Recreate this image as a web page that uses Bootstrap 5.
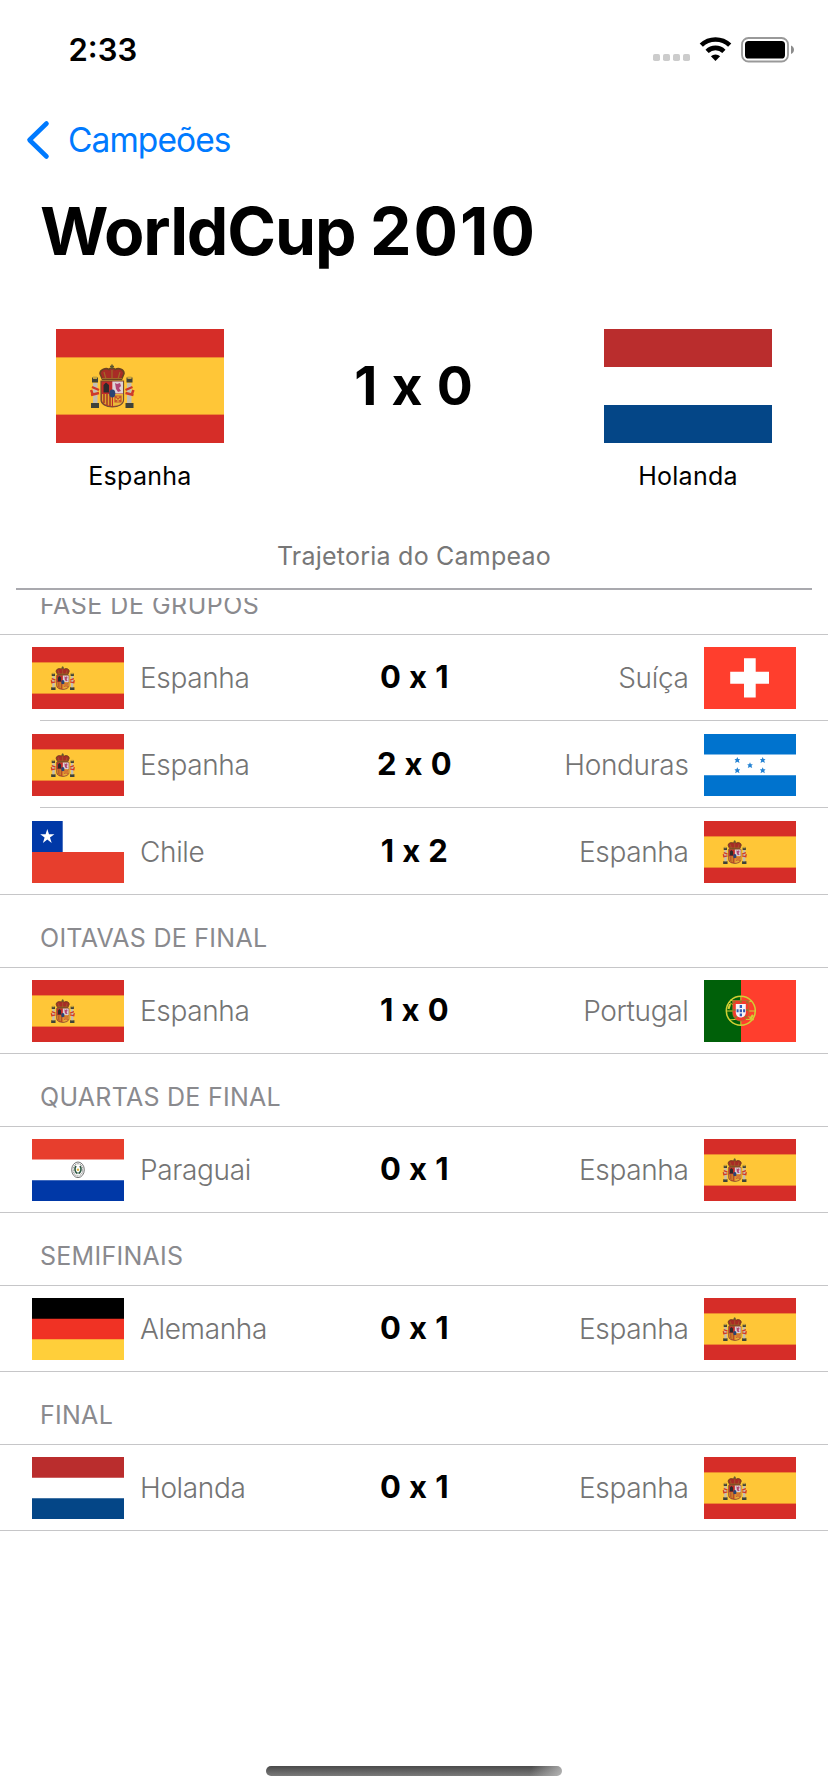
<!DOCTYPE html>
<html lang="pt-BR">
<head>
<meta charset="utf-8">
<meta name="viewport" content="width=device-width, initial-scale=1">
<title>WorldCup 2010</title>
<link rel="stylesheet" href="https://cdn.jsdelivr.net/npm/bootstrap@5.3.0/dist/css/bootstrap.min.css">
<style>
  body { font-family: Inter, "Liberation Sans", sans-serif; color: #000; background: #fff; line-height: 1.2; }
  .screen { height: 1792px; }
  .status-bar { height: 100px; padding: 0 34px 0 68.5px; font-size: 31px; font-weight: 600; }
  .nav-back { height: 80px; padding-left: 26px; gap: 18px; font-size: 33.5px; letter-spacing: -.93px; color: #007aff; }
  .page-title { height: 104px; padding: 0 0 0 40px; font-size: 66px; font-weight: 700; letter-spacing: -1.15px; white-space: pre; }
  .page-title .year { letter-spacing: 2px; }
  .final-match { padding: 45px 56px 0; }
  .final-match .flag { width: 168px; height: 114px; display: block; }
  .final-score { height: 114px; font-size: 53.5px; font-weight: 700; letter-spacing: .8px; }
  .final-name { height: 66px; font-size: 25px; letter-spacing: .28px; }
  .path-title { height: 64px; margin: 15px 16px 0; box-sizing: content-box; border-bottom: 2px solid #a9a9ae; font-size: 25px; letter-spacing: .23px; color: #777; }
  .path-list { margin-top: 8px; }
  .stage-name { height: 72px; padding: 0 0 14px 40px; font-size: 25px; line-height: 30px; letter-spacing: .27px; color: #8a8a8e; }
  .stage:first-child .stage-name { height: 44px; margin-top: -8px; letter-spacing: .5px; }
  .games { border-top: 1px solid #c6c6c8; border-bottom: 1px solid #c6c6c8; }
  .game { height: 86px; padding: 12px 32px 0; }
  .game + .game { height: 87px; padding-top: 13px; }
  .game + .game:last-child { height: 86px; }
  .game:only-child { height: 85px; }
  .game:not(:last-child) { background: linear-gradient(#c6c6c8, #c6c6c8) 40px 100% / 100% 1px no-repeat; }
  .game .flag { width: 92px; height: 62px; flex: none; }
  .team { flex: 1 1 0; gap: 16px; height: 62px; font-size: 28px; font-weight: 300; letter-spacing: -.35px; color: #747474; }
  .team.justify-content-end { gap: 15.5px; }
  .team span { padding-top: 2px; }
  .result { height: 62px; padding: 0 0 2px 1px; font-size: 31px; font-weight: 700; letter-spacing: .4px; }
  .home-bar { width: 296px; height: 10px; margin-bottom: 16px; border-radius: 5px;
    background: linear-gradient(105deg, transparent 89%, rgba(190,190,190,.85) 100%), linear-gradient(#4a4a4a, #7a7a7a); }
</style>
</head>
<body>

<svg width="0" height="0" class="position-absolute" aria-hidden="true">
  <symbol id="es" viewBox="0 0 168 114" preserveAspectRatio="none">
    <path fill="#d62d28" d="M0 0h168v114H0z"/>
    <path fill="#ee8a30" d="M0 28h168v58H0z"/>
    <path fill="#ffc637" d="M0 29h168v56H0z"/>
    <!-- pillars -->
    <path fill="#3f4239" d="M36 48.500h6v5h-6zM70.500 48.500h6v5h-6zM35 74h8v5h-8zM69.500 74h8v5h-8z"/>
    <path fill="#c8a33c" d="M37 47.500h4V50h-4zM71.500 47.500h4V50h-4z"/>
    <path fill="#c4bfb2" d="M37 54h4.500v20H37zM71 54h4.500v20H71z"/>
    <path fill="none" stroke="#cf3a2a" stroke-width="2.400" d="M35 66l8-2M36 58l7 3M35 61l2 5M77.500 66l-8-2M76.500 58l-7 3M77.500 61l-2 5"/>
    <!-- crown -->
    <path fill="#a82c26" stroke="#6a4220" stroke-width="1.600" d="M46.500 50.500l-2.500-6c0-4 6-6 9-4 1-2 5-2 6 0 4-2 9 0 9 4l-2.500 6z"/>
    <path fill="none" stroke="#a06a28" stroke-width="1.200" d="M50 50l-2-7M56 50v-9M62 50l2-7M46 49.500h20"/>
    <path stroke="#5b5530" stroke-width="1.500" d="M56 35.500v5M54 37.500h4"/>
    <!-- shield -->
    <path fill="#c22b28" stroke="#6f4c35" stroke-width="1.200" d="M45 52h22.500v19c0 4-5 7-11.200 7S45 75 45 71z"/>
    <path fill="#ddd3d5" d="M56.300 52.500H67v12H56.300z"/>
    <path fill="#b04674" d="M59 54l2 1 3-1 1 3-2 2 2 3-3 1-2-3z"/>
    <path fill="#2c2a2c" d="M47.500 56l2.500-2.500 3 2.500v7.500h-5.500z"/>
    <path fill="#dfa52e" d="M46 65h10v12c-6-.5-10-3-10-6z"/>
    <path stroke="#a83426" stroke-width="1.500" d="M48 65v9M51 65v11M54 65v12"/>
    <path fill="#e8ba3b" d="M57 65h10v6c0 3-4 6-10 6z"/>
    <path fill="none" stroke="#c7522c" stroke-width="1.200" d="M59 67h6v6h-6zM59 67l6 6M65 67l-6 6"/>
    <ellipse cx="56.300" cy="64.500" rx="3" ry="4" fill="#2a4474"/>
  </symbol>
  <symbol id="nl" viewBox="0 0 168 114" preserveAspectRatio="none">
    <path fill="#fff" d="M0 0h168v114H0z"/><path fill="#ba2d2d" d="M0 0h168v38H0z"/><path fill="#044687" d="M0 76h168v38H0z"/>
  </symbol>
  <symbol id="ch" viewBox="0 0 92 62">
    <path fill="#ff3e2d" d="M0 0h92v62H0z"/><path fill="#fff" d="M40 11.300h11.700v13.500H65v12H51.700v13.700H40V36.800H26.200v-12H40z"/>
  </symbol>
  <symbol id="hn" viewBox="0 0 92 62">
    <path fill="#fff" d="M0 0h92v62H0z"/><path fill="#0073ce" d="M0 0h92v20.600H0zM0 41.300h92V62H0z"/>
    <g fill="#2583d3">
      <path id="st" d="M33.300 23l.9 2h1.900l-1.300 1.600.7 2.300-2.200-1.200-2.200 1.200.7-2.300-1.300-1.600h1.900z"/>
      <use href="#st" y="10.300"/><use href="#st" x="25.400"/><use href="#st" x="25.400" y="10.300"/><use href="#st" x="12.700" y="5.200"/>
    </g>
  </symbol>
  <symbol id="cl" viewBox="0 0 92 62">
    <path fill="#fff" d="M0 0h92v62H0z"/><path fill="#e73e2d" d="M0 31h92v31H0z"/><path fill="#0038a7" d="M0 0h30.700v31H0z"/>
    <path fill="#fff" d="M15.300 8l1.700 5.300h5.400l-4.400 3.300 1.700 5.300-4.400-3.300-4.400 3.300 1.700-5.300-4.400-3.300h5.400z"/>
  </symbol>
  <symbol id="pt" viewBox="0 0 92 62">
    <path fill="#ff3e2d" d="M0 0h92v62H0z"/><path fill="#006009" d="M0 0h37v62H0z"/>
    <g fill="none" stroke="#d2cf34" stroke-width="1.500">
      <circle cx="36.800" cy="30.800" r="14.500"/>
      <path stroke-width="1" d="M36.800 16v30M22.500 31h29M25 22c7 5 18 14 25 18M25 40c8-1 18-1 24 0M26 20c8 3 15 3 22 1"/>
      <path stroke-width="2.200" d="M26 24l-1.500 5M46 39l3-4"/>
    </g>
    <path fill="#f33a2d" stroke="#a87a2c" stroke-width=".8" d="M28.800 20.500h16V33c0 5-4 8-8 8s-8-3-8-8z"/>
    <path fill="#f5f5fa" d="M31.800 24h10v8.500c0 3-2.500 5-5 5s-5-2-5-5z"/>
    <path fill="#3159b5" d="M35.700 25h2.300v3h-2.300zM35.700 29.300h2.300v3h-2.300zM35.700 33.500h2.300v2.800h-2.300zM32.600 29.300h2v3h-2zM39.100 29.300h2v3h-2z"/>
    <path fill="#96772a" d="M29.300 21.200h2v2h-2zM35.800 21h2v2h-2zM42.300 21.200h2v2h-2zM29.300 29h2v2h-2zM42.300 29h2v2h-2zM31 36h2v2h-2zM40.700 36h2v2h-2z"/>
  </symbol>
  <symbol id="py" viewBox="0 0 92 62">
    <path fill="#fff" d="M0 0h92v62H0z"/><path fill="#e73e2d" d="M0 0h92v20.500H0z"/><path fill="#0038a7" d="M0 41.300h92V62H0z"/>
    <g fill="none">
      <ellipse cx="46" cy="30.800" rx="6.300" ry="7.800" stroke="#666" stroke-width=".9"/>
      <ellipse cx="46" cy="30.800" rx="4.700" ry="6.200" stroke="#999" stroke-width="1.200" stroke-dasharray="1 .7"/>
      <path stroke="#2c5540" stroke-width="1.600" d="M44 27c-2 3-1 6 1.500 7.500M48 27c2 3 1 6-1.500 7.500"/>
    </g>
    <circle cx="46" cy="30.700" r="1.200" fill="#d9b545"/>
  </symbol>
  <symbol id="de" viewBox="0 0 92 62">
    <path d="M0 0h92v21H0z"/><path fill="#f03224" d="M0 20.800h92V42H0z"/><path fill="#ffcf3a" d="M0 41.200h92V62H0z"/>
  </symbol>
</svg>

<div class="screen d-flex flex-column overflow-hidden">
  <header>
    <div class="status-bar d-flex align-items-center justify-content-between">
      <span>2:33</span>
      <svg width="141" height="26" viewBox="0 0 141 26" aria-hidden="true">
        <g fill="#ccc"><rect y="17" width="7" height="7" rx="1.800"/><rect x="10" y="17" width="7" height="7" rx="1.800"/><rect x="20" y="17" width="7" height="7" rx="1.800"/><rect x="30" y="17" width="7" height="7" rx="1.800"/></g>
        <g fill="none" stroke="#000" stroke-width="4.600"><path d="M48.300 8.200a20.400 20.400 0 0 1 28.400 0"/><path d="M54.100 14.300a12 12 0 0 1 16.800 0"/></g>
        <path d="M62.500 24l-4.600-4.700a6.800 6.800 0 0 1 9.200 0z"/>
        <rect x="89" y="1" width="46" height="23.500" rx="6.500" fill="none" stroke="#999" stroke-width="1.800"/>
        <rect x="92" y="4" width="40" height="17.500" rx="3.600"/>
        <path fill="#8c8c8c" d="M138 8.500c4 1.500 4 7 0 8.500z"/>
      </svg>
    </div>
    <a href="#" class="nav-back d-flex align-items-center text-decoration-none">
      <svg width="24" height="40" viewBox="0 0 24 40" fill="none" stroke="#007aff" stroke-width="4.600" stroke-linecap="round" stroke-linejoin="round" aria-hidden="true"><path d="M20.500 3.500L3.500 20l17 16.500"/></svg>
      <span>Campeões</span>
    </a>
    <h1 class="page-title d-flex align-items-center m-0"><span>WorldCup </span><span class="year">2010</span></h1>
  </header>

  <section class="final-match d-flex justify-content-between">
    <div><svg class="flag"><use href="#es"/></svg><div class="final-name d-flex align-items-center justify-content-center">Espanha</div></div>
    <div class="final-score d-flex align-items-center">1 x 0</div>
    <div><svg class="flag"><use href="#nl"/></svg><div class="final-name d-flex align-items-center justify-content-center">Holanda</div></div>
  </section>

  <div class="path-title d-flex align-items-center justify-content-center">Trajetoria do Campeao</div>

  <main class="path-list overflow-hidden">
    <section class="stage">
      <div class="stage-name d-flex align-items-end">FASE DE GRUPOS</div>
      <div class="games">
        <div class="game d-flex">
          <div class="team d-flex align-items-center"><svg class="flag"><use href="#es"/></svg><span>Espanha</span></div>
          <div class="result d-flex align-items-center">0 x 1</div>
          <div class="team d-flex align-items-center justify-content-end"><span>Suíça</span><svg class="flag"><use href="#ch"/></svg></div>
        </div>
        <div class="game d-flex">
          <div class="team d-flex align-items-center"><svg class="flag"><use href="#es"/></svg><span>Espanha</span></div>
          <div class="result d-flex align-items-center">2 x 0</div>
          <div class="team d-flex align-items-center justify-content-end"><span>Honduras</span><svg class="flag"><use href="#hn"/></svg></div>
        </div>
        <div class="game d-flex">
          <div class="team d-flex align-items-center"><svg class="flag"><use href="#cl"/></svg><span>Chile</span></div>
          <div class="result d-flex align-items-center">1 x 2</div>
          <div class="team d-flex align-items-center justify-content-end"><span>Espanha</span><svg class="flag"><use href="#es"/></svg></div>
        </div>
      </div>
    </section>
    <section class="stage">
      <div class="stage-name d-flex align-items-end">OITAVAS DE FINAL</div>
      <div class="games">
        <div class="game d-flex">
          <div class="team d-flex align-items-center"><svg class="flag"><use href="#es"/></svg><span>Espanha</span></div>
          <div class="result d-flex align-items-center">1 x 0</div>
          <div class="team d-flex align-items-center justify-content-end"><span>Portugal</span><svg class="flag"><use href="#pt"/></svg></div>
        </div>
      </div>
    </section>
    <section class="stage">
      <div class="stage-name d-flex align-items-end">QUARTAS DE FINAL</div>
      <div class="games">
        <div class="game d-flex">
          <div class="team d-flex align-items-center"><svg class="flag"><use href="#py"/></svg><span>Paraguai</span></div>
          <div class="result d-flex align-items-center">0 x 1</div>
          <div class="team d-flex align-items-center justify-content-end"><span>Espanha</span><svg class="flag"><use href="#es"/></svg></div>
        </div>
      </div>
    </section>
    <section class="stage">
      <div class="stage-name d-flex align-items-end">SEMIFINAIS</div>
      <div class="games">
        <div class="game d-flex">
          <div class="team d-flex align-items-center"><svg class="flag"><use href="#de"/></svg><span>Alemanha</span></div>
          <div class="result d-flex align-items-center">0 x 1</div>
          <div class="team d-flex align-items-center justify-content-end"><span>Espanha</span><svg class="flag"><use href="#es"/></svg></div>
        </div>
      </div>
    </section>
    <section class="stage">
      <div class="stage-name d-flex align-items-end">FINAL</div>
      <div class="games">
        <div class="game d-flex">
          <div class="team d-flex align-items-center"><svg class="flag"><use href="#nl"/></svg><span>Holanda</span></div>
          <div class="result d-flex align-items-center">0 x 1</div>
          <div class="team d-flex align-items-center justify-content-end"><span>Espanha</span><svg class="flag"><use href="#es"/></svg></div>
        </div>
      </div>
    </section>
  </main>

  <div class="home-bar mt-auto mx-auto"></div>
</div>

<script src="https://cdn.jsdelivr.net/npm/bootstrap@5.3.0/dist/js/bootstrap.bundle.min.js"></script>
</body>
</html>
